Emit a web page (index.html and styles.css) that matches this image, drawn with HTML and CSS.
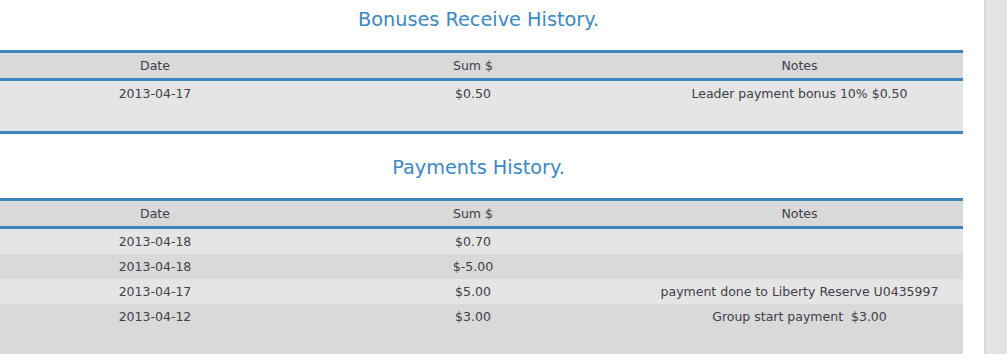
FILE: index.html
```html
<!DOCTYPE html>
<html>
<head>
<meta charset="utf-8">
<link rel="stylesheet" href="styles.css">
</head>
<body>
<div class="page">
  <div class="main">
    <section class="section">
      <h2 class="title">Bonuses Receive History.</h2>
      <table class="history">
        <thead>
          <tr><th class="c-date">Date</th><th class="c-sum">Sum $</th><th class="c-notes">Notes</th></tr>
        </thead>
        <tbody>
          <tr class="light"><td>2013-04-17</td><td>$0.50</td><td>Leader payment bonus 10% $0.50</td></tr>
          <tr class="light filler"><td></td><td></td><td></td></tr>
        </tbody>
      </table>
    </section>
    <section class="section">
      <h2 class="title">Payments History.</h2>
      <table class="history">
        <thead>
          <tr><th class="c-date">Date</th><th class="c-sum">Sum $</th><th class="c-notes">Notes</th></tr>
        </thead>
        <tbody>
          <tr class="light"><td>2013-04-18</td><td>$0.70</td><td></td></tr>
          <tr class="dark"><td>2013-04-18</td><td>$-5.00</td><td></td></tr>
          <tr class="light"><td>2013-04-17</td><td>$5.00</td><td>payment done to Liberty Reserve U0435997</td></tr>
          <tr class="dark"><td>2013-04-12</td><td>$3.00</td><td>Group start payment&nbsp; $3.00</td></tr>
          <tr class="dark filler"><td></td><td></td><td></td></tr>
        </tbody>
      </table>
    </section>
  </div>
  <div class="rail"></div>
</div>
</body>
</html>
```

FILE: styles.css
```css
html, body {
  margin: 0;
  padding: 0;
  background: #ffffff;
  height: 100%;
  overflow: hidden;
}

.page {
  display: flex;
  justify-content: space-between;
  height: 354px;
  overflow: hidden;
  font-family: "DejaVu Sans", Verdana, sans-serif;
  color: #404048;
}

.main {
  width: 963px;
  padding-top: 9px;
}

.section + .section {
  margin-top: 23px;
}

.title {
  margin: 0 0 19px;
  padding-right: 6px;
  font-size: 19.3px;
  line-height: 22px;
  font-weight: normal;
  text-align: center;
  color: #3c88c2;
}

.history {
  width: 963px;
  border-collapse: collapse;
  table-layout: fixed;
  border-top: 3px solid #3c86bd;
  font-size: 12.5px;
}

.history th {
  height: 25px;
  padding: 0;
  font-weight: normal;
  background: #d9d9d9;
  border-bottom: 3px solid #3c86bd;
  text-align: center;
}

.section:first-child .history {
  border-bottom: 3px solid #3c86bd;
}

.c-date { width: 310px; }
.c-sum { width: 326px; }
.c-notes { width: 327px; }

.history td {
  height: 25px;
  padding: 0;
  text-align: center;
  white-space: nowrap;
}

.light { background: #e5e5e5; }
.dark { background: #d9d9d9; }

.rail {
  width: 21px;
  height: 354px;
  background: #e3e3e3;
  border-left: 2px solid #d8d8d8;
}
```
